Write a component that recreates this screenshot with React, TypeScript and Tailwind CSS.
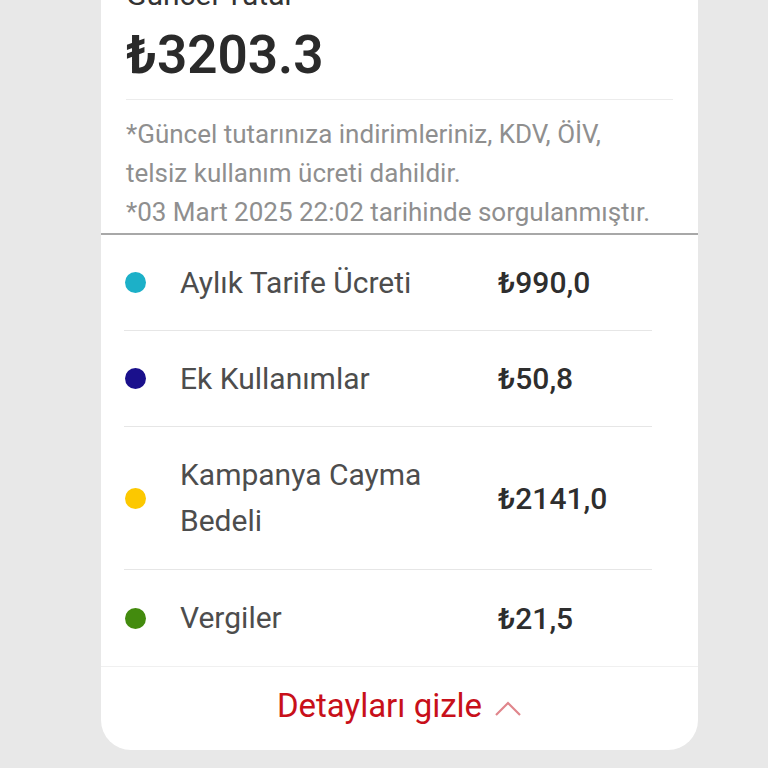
export default function App() {
  const rows = [
    { dot: "bg-[#1cb0c8]", label: "Aylık Tarife Ücreti", value: "990,0", tall: false },
    { dot: "bg-[#1a108c]", label: "Ek Kullanımlar", value: "50,8", tall: false },
    { dot: "bg-[#fcc800]", label: "Kampanya Cayma Bedeli", value: "2141,0", tall: true },
    { dot: "bg-[#438b0e]", label: "Vergiler", value: "21,5", tall: false },
  ];

  return (
    <div className="h-[768px] w-[768px] overflow-hidden bg-[#e8e8e8] font-['Roboto',sans-serif]">
      <div className="ml-[101px] -mt-[25px] w-[597px] rounded-b-[30px] bg-white">
        {/* summary */}
        <div className="px-[25px]">
          <p className="text-[30px] leading-[40px] text-[#333]">Güncel Tutar</p>
          <p className="mt-[8px] text-[53px] font-semibold leading-[64px] text-[#2a2a2a]">
            ₺3203.3
          </p>
          <div className="mt-[12px] h-px bg-[#ececec]" />
          <div className="pt-[15px] pb-[1px] text-[26px] leading-[39px] text-[#8f8f8f]">
            <p>*Güncel tutarınıza indirimleriniz, KDV, ÖİV,</p>
            <p>telsiz kullanım ücreti dahildir.</p>
            <p>*03 Mart 2025 22:02 tarihinde sorgulanmıştır.</p>
          </div>
        </div>
        <div className="h-[2px] bg-[#a8a8a8]" />

        {/* breakdown */}
        <div className="pl-[23px] pr-[46px]">
          {rows.map((r, i) => (
            <div
              key={r.label}
              className={
                "flex items-center " +
                (r.tall ? "h-[143px] " : "h-[96px] ") +
                (i < rows.length - 1 ? "border-b border-[#e6e6e6]" : "")
              }
            >
              <span className={"ml-px h-[21px] w-[21px] shrink-0 rounded-full " + r.dot} />
              <span className="ml-[34px] w-[318px] text-[30px] leading-[46px] text-[#4d4d4d]">
                {r.label}
              </span>
              <span className="text-[30px] font-medium text-[#2e2e2e]">₺{r.value}</span>
            </div>
          ))}
        </div>

        {/* toggle */}
        <div className="flex h-[84px] items-center justify-center border-t border-[#f0f0f0] pb-[6px]">
          <span className="text-[33px] leading-[40px] text-[#c8101a]">Detayları gizle</span>
          <svg className="ml-[12px] mt-[4px]" width="28" height="18" viewBox="0 0 28 18" fill="none">
            <path d="M2 16 L14 4 L26 16" stroke="#e0868c" strokeWidth="2.2" />
          </svg>
        </div>
      </div>
    </div>
  );
}
